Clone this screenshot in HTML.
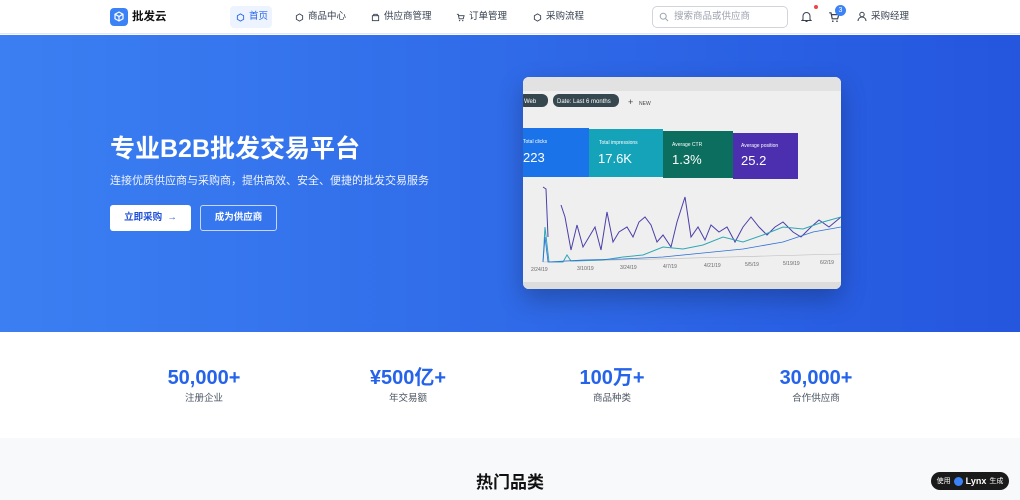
<!DOCTYPE html>
<html><head><meta charset="utf-8"><style>
*{margin:0;padding:0;box-sizing:border-box}
body{width:1020px;height:500px;overflow:hidden;font-family:"Liberation Sans","Noto Sans CJK SC",sans-serif;background:#f8f9fb;position:relative}
.nav{position:absolute;top:0;left:0;width:1020px;height:34px;background:#fff;border-bottom:1px solid #e5e7eb}
.abs{position:absolute}
.logo{left:110px;top:8px;width:18px;height:18px;background:#3b82f6;border-radius:4px}
.brand{left:132px;top:9px;font-size:11.5px;line-height:16px;font-weight:bold;color:#111}
.ni{top:10px;font-size:9.5px;line-height:14px;color:#374151;display:flex;align-items:center;gap:4px}
.ni svg{width:9px;height:9px}
.active{left:230px;top:6px;width:42px;height:22px;background:#eef4ff;border-radius:4px}
.search{left:652px;top:6px;width:136px;height:22px;border:1px solid #d1d5db;border-radius:5px;font-size:9.5px;line-height:20px;color:#9ca3af;padding-left:21px}
.hero{position:absolute;top:35px;left:0;width:1020px;height:297px;background:linear-gradient(90deg,#3b7ff2,#2456de)}
.h1{left:110px;top:132px;font-size:25px;line-height:34px;font-weight:bold;color:#fff}
.sub{left:110px;top:173px;font-size:11px;line-height:16px;color:#eef3ff}
.b1{left:110px;top:205px;width:81px;height:26px;background:#fff;border-radius:3px;color:#1d4ed8;font-size:9.5px;font-weight:bold;text-align:center;line-height:26px}
.b2{left:200px;top:205px;width:77px;height:26px;border:1px solid #c7d7fb;border-radius:3px;color:#fff;font-size:9.5px;font-weight:bold;text-align:center;line-height:24px}
.stats{position:absolute;top:332px;left:0;width:1020px;height:106px;background:#fff}
.st{position:absolute;top:33px;width:200px;text-align:center}
.st b{display:block;font-size:20px;line-height:26px;height:26px;color:#2563eb}
.st span{display:block;font-size:9.5px;line-height:14px;color:#4b5563;margin-top:1px}
.hot{left:0;width:1020px;top:471px;text-align:center;font-size:17px;line-height:24px;font-weight:bold;color:#111}
.lynx{left:931px;top:472px;width:78px;height:18px;background:#1a1a1a;border-radius:9px;color:#fff;font-size:7px;display:flex;align-items:center;justify-content:center;gap:3px}
</style></head><body>
<div class="nav">
<div class="abs logo"><svg width="18" height="18" viewBox="0 0 18 18"><path d="M9 4l4 2.2v4.6L9 13l-4-2.2V6.2z M5 6.2L9 8.5l4-2.3M9 8.5V13" fill="none" stroke="#fff" stroke-width="1.2"/></svg></div>
<div class="abs brand">批发云</div>
<div class="abs active"></div>
<div class="abs ni" style="left:236px;color:#2563eb"><svg viewBox="0 0 10 10"><path d="M5 1l3.5 2v4L5 9 1.5 7V3z" fill="none" stroke="#2563eb"/></svg>首页</div>
<div class="abs ni" style="left:295px"><svg viewBox="0 0 10 10"><path d="M5 1l3.5 2v4L5 9 1.5 7V3z" fill="none" stroke="#374151"/></svg>商品中心</div>
<div class="abs ni" style="left:371px"><svg viewBox="0 0 10 10"><rect x="1.5" y="3" width="7" height="5.5" fill="none" stroke="#374151"/><path d="M3 3V1.5h4V3" fill="none" stroke="#374151"/></svg>供应商管理</div>
<div class="abs ni" style="left:456px"><svg viewBox="0 0 10 10"><path d="M1 1.5h1.5l1 5h4.5l1-3.5H3" fill="none" stroke="#374151"/><circle cx="4" cy="8.5" r=".7" fill="#374151"/><circle cx="7.5" cy="8.5" r=".7" fill="#374151"/></svg>订单管理</div>
<div class="abs ni" style="left:533px"><svg viewBox="0 0 10 10"><path d="M5 1l3.5 2v4L5 9 1.5 7V3z" fill="none" stroke="#374151"/></svg>采购流程</div>
<div class="abs search">搜索商品或供应商</div>
<svg class="abs" style="left:659px;top:12px" width="10" height="10" viewBox="0 0 10 10"><circle cx="4.2" cy="4.2" r="3" fill="none" stroke="#9ca3af"/><path d="M6.5 6.5l2.5 2.5" stroke="#9ca3af"/></svg>
<svg class="abs" style="left:801px;top:11px" width="11" height="12" viewBox="0 0 11 12"><path d="M2 8.5V5a3.5 3.5 0 017 0v3.5l1 1H1z M4.5 10.5h2" fill="none" stroke="#374151"/></svg>
<div class="abs" style="left:814px;top:5px;width:4px;height:4px;border-radius:2px;background:#ef4444"></div>
<svg class="abs" style="left:828px;top:11px" width="12" height="12" viewBox="0 0 10 10"><path d="M1 1.5h1.5l1 5h4.5l1-3.5H3" fill="none" stroke="#374151"/><circle cx="4" cy="8.5" r=".7" fill="#374151"/><circle cx="7.5" cy="8.5" r=".7" fill="#374151"/></svg>
<div class="abs" style="left:835px;top:5px;width:11px;height:11px;border-radius:6px;background:#3b82f6;color:#fff;font-size:7px;text-align:center;line-height:11px">3</div>
<svg class="abs" style="left:857px;top:11px" width="10" height="11" viewBox="0 0 10 11"><circle cx="5" cy="3.5" r="2.2" fill="none" stroke="#374151"/><path d="M1 10a4 4 0 018 0" fill="none" stroke="#374151"/></svg>
<div class="abs" style="left:871px;top:10px;font-size:9.5px;line-height:14px;color:#374151">采购经理</div>
</div>
<div class="hero"></div>
<div class="abs h1">专业B2B批发交易平台</div>
<div class="abs sub">连接优质供应商与采购商，提供高效、安全、便捷的批发交易服务</div>
<div class="abs b1">立即采购 &nbsp;→</div>
<div class="abs b2">成为供应商</div>
<div class="abs" style="left:523px;top:77px;width:318px;height:212px;border-radius:6px;overflow:hidden;background:#ececec;box-shadow:0 10px 25px rgba(0,0,0,.25)">
<svg width="318" height="212" viewBox="0 0 318 212">
<rect width="318" height="212" fill="#efefef"/>
<rect x="0" y="0" width="318" height="14" fill="#e2e2e2"/>
<rect x="-5" y="17" width="30" height="13" rx="6" fill="#37474f"/><text x="1" y="26" font-size="6" fill="#fff" font-family="Liberation Sans">Web</text>
<rect x="30" y="17" width="66" height="13" rx="6" fill="#37474f"/><text x="34" y="26" font-size="6" fill="#fff" font-family="Liberation Sans">Date: Last 6 months</text>
<text x="105" y="28" font-size="9" fill="#444">+</text><text x="116" y="28" font-size="5" fill="#444" font-family="Liberation Sans">NEW</text>
<rect x="0" y="51" width="66" height="49" fill="#1a73e8"/>
<rect x="66" y="52" width="74" height="48" fill="#14a3b8"/>
<rect x="140" y="54" width="70" height="47" fill="#0b6e5e"/>
<rect x="210" y="56" width="65" height="46" fill="#4b2fae"/>
<text x="0" y="66" font-size="5" fill="#fff" font-family="Liberation Sans">Total clicks</text><text x="0" y="85" font-size="13" fill="#fff" font-family="Liberation Sans">223</text>
<text x="76" y="67" font-size="5" fill="#fff" font-family="Liberation Sans">Total impressions</text><text x="75" y="86" font-size="13" fill="#fff" font-family="Liberation Sans">17.6K</text>
<text x="149" y="69" font-size="5" fill="#fff" font-family="Liberation Sans">Average CTR</text><text x="149" y="87" font-size="13" fill="#fff" font-family="Liberation Sans">1.3%</text>
<text x="218" y="70" font-size="5" fill="#fff" font-family="Liberation Sans">Average position</text><text x="218" y="88" font-size="13" fill="#fff" font-family="Liberation Sans">25.2</text>
<path d="M20 185 L318 177" stroke="#bbb" stroke-width=".6"/>
<path d="M20 110 L23 112 L25 160 M38 128 L42 140 L48 173 L54 148 L60 170 L66 160 L72 150 L78 173 L84 135 L90 165 L96 155 L104 150 L110 160 L116 145 L122 140 L128 148 L134 165 L140 158 L148 170 L154 145 L162 120 L168 160 L175 150 L182 163 L188 148 L196 155 L204 150 L212 165 L220 150 L228 140 L236 150 L244 158 L252 150 L260 145 L270 155 L278 160 L288 150 L296 143 L306 150 L318 140" fill="none" stroke="#4b3fa8" stroke-width="1"/>
<path d="M20 185 L22 150 L26 185 L40 185 L44 178 L48 184 L80 183 L100 180 L120 178 L140 170 L160 172 L180 168 L200 160 L220 165 L240 158 L260 150 L280 152 L300 145 L318 140" fill="none" stroke="#2fa7b5" stroke-width="1"/>
<path d="M20 185 L22 160 L25 185 L60 183 L100 182 L140 180 L180 176 L220 172 L260 165 L290 155 L318 150" fill="none" stroke="#2b6fd8" stroke-width=".8"/>
<g font-size="5" fill="#666" font-family="Liberation Sans"><text x="8" y="194">2/24/19</text><text x="54" y="193">3/10/19</text><text x="97" y="192">3/24/19</text><text x="140" y="191">4/7/19</text><text x="181" y="190">4/21/19</text><text x="222" y="189">5/5/19</text><text x="260" y="188">5/19/19</text><text x="297" y="187">6/2/19</text></g>
<rect x="0" y="205" width="318" height="7" fill="#ddd"/>
</svg></div>
<div class="stats">
<div class="st" style="left:104px"><b>50,000+</b><span>注册企业</span></div>
<div class="st" style="left:308px"><b>¥500亿+</b><span>年交易额</span></div>
<div class="st" style="left:512px"><b>100万+</b><span>商品种类</span></div>
<div class="st" style="left:716px"><b>30,000+</b><span>合作供应商</span></div>
</div>
<div class="abs hot">热门品类</div>
<div class="abs lynx">使用 <span style="display:inline-block;width:9px;height:9px;border-radius:5px;background:#3b82f6"></span><b style="font-size:9px">Lynx</b> 生成</div>
</body></html>
